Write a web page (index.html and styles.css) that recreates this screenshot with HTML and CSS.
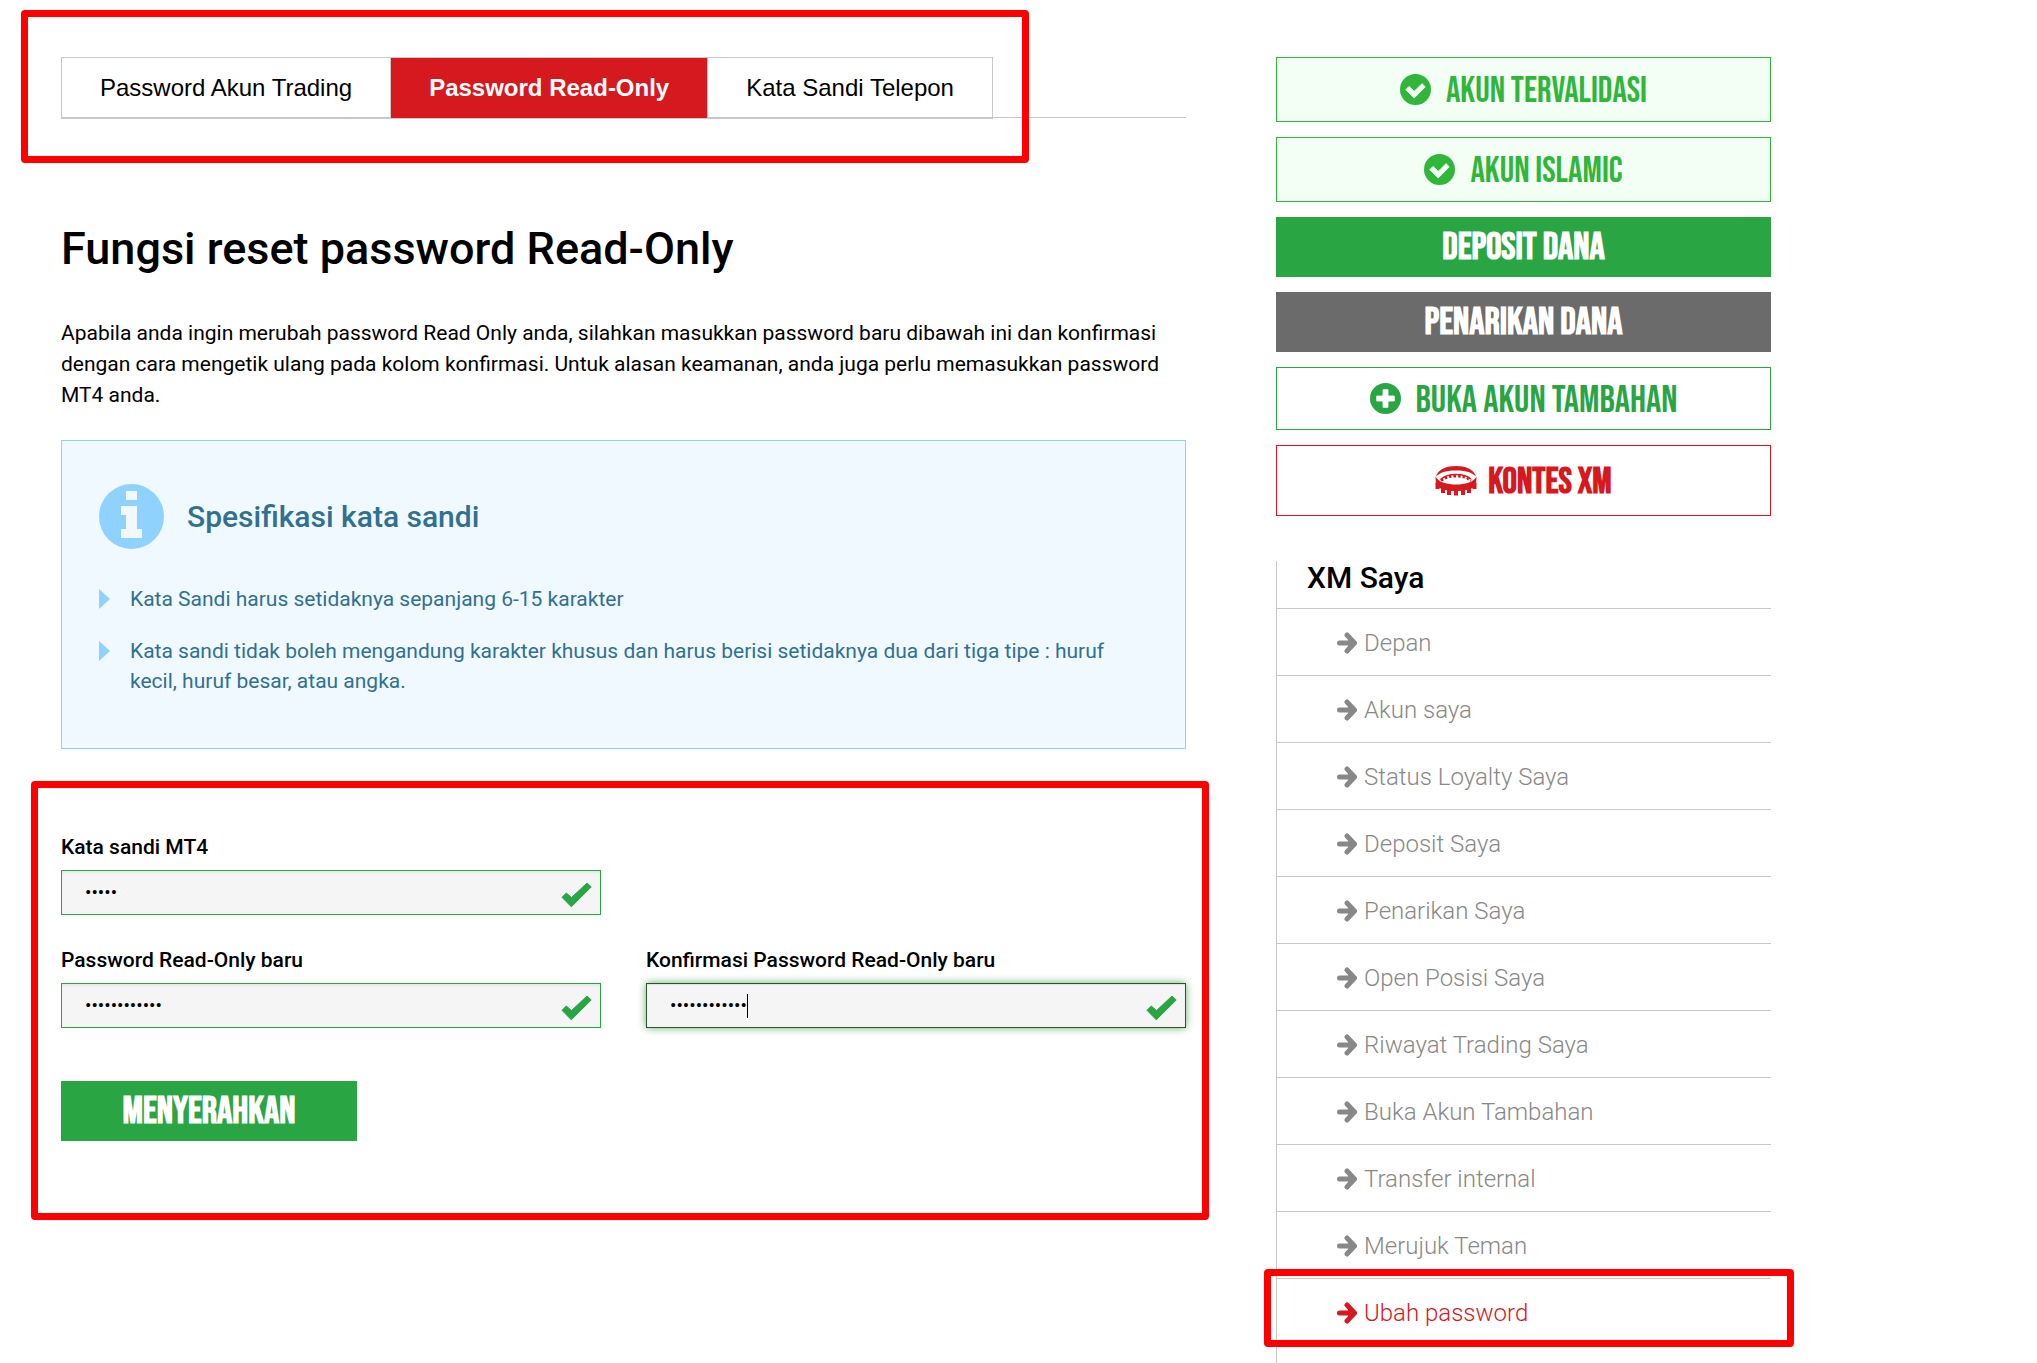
FILE: index.html
```html
<!DOCTYPE html>
<html lang="id">

<head>
    <meta charset="utf-8">
    <title>Ubah password</title>
    <link rel="stylesheet" href="styles.css">
</head>

<body>
    <svg width="0" height="0" class="sprite">
        <symbol id="icon-check-circle" viewBox="0 0 32 32">
            <circle cx="16" cy="16" r="16" fill="currentColor"/>
            <path d="M6 16.200l3.400-3.400 5.300 5.200 8-8 3.300 3.300-11.300 11.400z" fill="#f3fff5" stroke="#f3fff5" stroke-linejoin="round"/>
        </symbol>
        <symbol id="icon-plus-circle" viewBox="0 0 32 32">
            <circle cx="16" cy="16" r="16" fill="currentColor"/>
            <path d="M13.500 7h5v6.500H25v5h-6.500V25h-5v-6.500H7v-5h6.500z" fill="#fff" stroke="#fff" stroke-linejoin="round"/>
        </symbol>
        <symbol id="icon-arrow" viewBox="0 0 20 22">
            <path d="M2.500 11H15M10 3l7.500 8-7.500 8" fill="none" stroke="currentColor" stroke-width="5" stroke-linecap="round"/>
            <path d="M11 5l6 6-6 6z" fill="currentColor"/>
        </symbol>
        <symbol id="icon-check" viewBox="0 0 31 26">
            <path d="M1 15.300L5.300 11l5.200 4.600L26 1l4.200 4L10.300 24.800z" fill="currentColor" stroke="currentColor" stroke-linejoin="round"/>
        </symbol>
    </svg>

    <div class="page">
        <div class="content">
            <nav class="tabs">
                <ul class="tab-list">
                    <li><a href="#" class="tab">Password Akun Trading</a></li>
                    <li><a href="#" class="tab active">Password Read-Only</a></li>
                    <li><a href="#" class="tab">Kata Sandi Telepon</a></li>
                </ul>
            </nav>

            <h1>Fungsi reset password Read-Only</h1>
            <p class="intro">Apabila anda ingin merubah password Read Only anda, silahkan masukkan password baru dibawah ini dan konfirmasi dengan cara mengetik ulang pada kolom konfirmasi. Untuk alasan keamanan, anda juga perlu memasukkan password MT4 anda.</p>

            <div class="info-box">
                <div class="info-title">
                    <svg class="info-icon" viewBox="0 0 65 65">
                        <circle cx="32.500" cy="32.500" r="32.500" fill="#8fd2ff"/>
                        <path d="M27 7h11v9H27zM22 22h16v23h5v9H22v-9h5V31h-5z" fill="#f0f9ff"/>
                    </svg>
                    <h2>Spesifikasi kata sandi</h2>
                </div>
                <ul class="rules">
                    <li>Kata Sandi harus setidaknya sepanjang 6-15 karakter</li>
                    <li>Kata sandi tidak boleh mengandung karakter khusus dan harus berisi setidaknya dua dari tiga tipe : huruf kecil, huruf besar, atau angka.</li>
                </ul>
            </div>

            <form class="password-form">
                <div class="field">
                    <label for="mt4">Kata sandi MT4</label>
                    <div class="input-wrap">
                        <input type="password" id="mt4" value="abc12">
                        <svg class="valid"><use href="#icon-check"/></svg>
                    </div>
                </div>
                <div class="field new">
                    <label for="newPassword">Password Read-Only baru</label>
                    <div class="input-wrap">
                        <input type="password" id="newPassword" value="abcdef123456">
                        <svg class="valid"><use href="#icon-check"/></svg>
                    </div>
                </div>
                <div class="field confirm">
                    <label for="confirmPassword">Konfirmasi Password Read-Only baru</label>
                    <div class="input-wrap">
                        <input type="password" id="confirmPassword" value="abcdef123456" autofocus>
                        <span class="caret"></span>
                        <svg class="valid"><use href="#icon-check"/></svg>
                    </div>
                </div>
                <button type="submit" class="submit">MENYERAHKAN</button>
            </form>
        </div>

        <div class="sidebar">
            <a href="#" class="btn status"><svg><use href="#icon-check-circle"/></svg><span>AKUN TERVALIDASI</span></a>
            <a href="#" class="btn status"><svg><use href="#icon-check-circle"/></svg><span>AKUN ISLAMIC</span></a>
            <a href="#" class="btn deposit">DEPOSIT DANA</a>
            <a href="#" class="btn withdraw">PENARIKAN DANA</a>
            <a href="#" class="btn open-account"><svg><use href="#icon-plus-circle"/></svg><span>BUKA AKUN TAMBAHAN</span></a>
            <a href="#" class="btn contest">
                <svg class="arena" viewBox="0 0 42 30">
                    <path d="M1 10.500C3 3 12 0 21 0s18 3 20 10.500C37 6 29 4.500 21 4.500S5 6 1 10.500z" fill="currentColor"/>
                    <path d="M6 13c4-3.500 9-4.500 15-4.500s11 1 15 4.500" fill="none" stroke="currentColor" stroke-width="1.500"/>
                    <path d="M6 14.500c4-3.500 9-4.500 15-4.500s11 1 15 4.500" fill="none" stroke="currentColor" stroke-width="3" stroke-dasharray="2.500 2"/>
                    <path d="M0.500 10.500c3 6 12 8 20.500 8s17.500-2 20.500-8l-.5 9c-4 4-12 5.500-20 5.500S5 23.500 1 19.500z" fill="currentColor"/>
                    <path d="M2.500 17v6M8 19v8M14 20v9M21 20v9.500M28 20v9M34 19v8M39.500 17v6" fill="none" stroke="currentColor" stroke-width="4"/>
                </svg><span>KONTES XM</span></a>

            <nav class="menu">
                <h3>XM Saya</h3>
                <ul>
                    <li><a href="#"><svg><use href="#icon-arrow"/></svg>Depan</a></li>
                    <li><a href="#"><svg><use href="#icon-arrow"/></svg>Akun saya</a></li>
                    <li><a href="#"><svg><use href="#icon-arrow"/></svg>Status Loyalty Saya</a></li>
                    <li><a href="#"><svg><use href="#icon-arrow"/></svg>Deposit Saya</a></li>
                    <li><a href="#"><svg><use href="#icon-arrow"/></svg>Penarikan Saya</a></li>
                    <li><a href="#"><svg><use href="#icon-arrow"/></svg>Open Posisi Saya</a></li>
                    <li><a href="#"><svg><use href="#icon-arrow"/></svg>Riwayat Trading Saya</a></li>
                    <li><a href="#"><svg><use href="#icon-arrow"/></svg>Buka Akun Tambahan</a></li>
                    <li><a href="#"><svg><use href="#icon-arrow"/></svg>Transfer internal</a></li>
                    <li><a href="#"><svg><use href="#icon-arrow"/></svg>Merujuk Teman</a></li>
                    <li class="current"><a href="#"><svg><use href="#icon-arrow"/></svg>Ubah password</a></li>
                </ul>
            </nav>
        </div>
    </div>
</body>

</html>
```
FILE: styles.css
```css
* {
    box-sizing: border-box;
}

body {
    margin: 0;
    font-family: Roboto, sans-serif;
    font-size: 21px;
    color: #000;
    background-color: #fff;
}

ul {
    list-style: none;
    margin: 0;
    padding: 0;
}

a {
    color: inherit;
    text-decoration: none;
}

.sprite {
    position: absolute;
}

.page {
    display: grid;
    grid-template-columns: 25fr 11fr;
    gap: 90px;
    min-height: 100vh;
    padding: 57px 266px 0 61px;
}

/* tabs */
.tabs {
    display: flex;
    border-bottom: 1px solid #c8c8c8;
}

.tab-list {
    display: flex;
    position: relative;
    margin-bottom: -2px;
    border: 1px solid #c8c8c8;
}

.tab-list li + li {
    border-left: 1px solid #c8c8c8;
}

.tab {
    display: block;
    padding: 0 38px;
    font-family: "Liberation Sans", Arial, sans-serif;
    font-size: 24px;
    line-height: 60px;
}

.tab.active {
    background-color: #d6181f;
    color: #fff;
    font-weight: bold;
}

/* red frames */
.tab-list::after,
.password-form::after,
.current::after {
    content: "";
    position: absolute;
    border: 7px solid #ff0000;
    border-radius: 4px;
    pointer-events: none;
}

.tab-list::after {
    inset: -48px -37px -45px -41px;
}

.password-form::after {
    inset: -51px -23px -79px -30px;
}

.current::after {
    inset: -10px -23px -2px -13px;
}

h1 {
    margin: 100px 0 0;
    font-size: 45px;
    font-weight: 500;
    line-height: 62px;
}

.intro {
    margin: 38px 0 0;
    line-height: 31px;
}

/* info box */
.info-box {
    margin-top: 29px;
    padding: 43px 37px 52px;
    border: 1px solid #8fd2ff;
    background-color: #f0f9ff;
    color: #31708f;
}

.info-title {
    display: flex;
    align-items: center;
    gap: 23px;
}

.info-icon {
    width: 65px;
    height: 65px;
}

h2 {
    margin: 0;
    font-size: 30px;
    font-weight: 500;
}

.rules {
    margin-top: 35px;
}

.rules li {
    position: relative;
    margin-bottom: 22px;
    padding-left: 31px;
    line-height: 30px;
}

.rules li:last-child {
    margin-bottom: 0;
}

.rules li::before {
    content: "";
    position: absolute;
    left: 0;
    top: 5px;
    border-left: 11px solid #8fd2ff;
    border-top: 10px solid transparent;
    border-bottom: 10px solid transparent;
}

/* form */
.password-form {
    display: grid;
    grid-template-columns: 1fr 1fr;
    gap: 30px 45px;
    position: relative;
    margin-top: 83px;
}

.field.new {
    grid-area: 2 / 1;
}

.field.confirm {
    grid-area: 2 / 2;
}

label {
    display: block;
    margin-bottom: 8px;
    font-weight: 500;
    line-height: 30px;
}

.input-wrap {
    position: relative;
}

input {
    display: block;
    width: 100%;
    height: 45px;
    padding: 0 50px 0 23px;
    border: 1px solid #2aa544;
    background-color: #f5f5f5;
    box-shadow: inset 0 2px 2px #e8e8e8;
    font-family: Roboto, sans-serif;
    font-size: 19px;
    color: #000;
}

input:focus {
    outline: none;
    border-color: #2b542c;
    box-shadow: inset 0 1px 1px #e0e0e0, 0 0 8px #67b168;
    caret-color: transparent;
}

.caret {
    position: absolute;
    left: 101px;
    top: 11px;
    width: 1px;
    height: 24px;
    background-color: #000;
}

.valid {
    position: absolute;
    right: 9px;
    top: 12px;
    width: 31px;
    height: 26px;
    color: #2aa544;
}

.btn,
.submit {
    display: flex;
    align-items: center;
    justify-content: center;
    height: 60px;
    margin-bottom: 15px;
    font-family: "Bebas Neue", "Liberation Sans Narrow", sans-serif;
    font-size: 38px;
    font-weight: bold;
    color: #fff;
}

.submit {
    grid-column: 1;
    width: 296px;
    margin: 23px 0 0;
    border: none;
    background-color: #2aa544;
    cursor: pointer;
}

/* sidebar */
.sidebar {
    display: flex;
    flex-direction: column;
}

.btn svg {
    width: 31px;
    height: 31px;
    margin-right: 15px;
}

.btn span {
    padding-top: 3px;
}

.btn.status {
    height: 65px;
    border: 1px solid #32b53b;
    background-color: #f3fff5;
    font-size: 36px;
    font-weight: normal;
    color: #32b53b;
}

.btn.deposit {
    background-color: #2aa544;
}

.btn.withdraw {
    background-color: #6b6b6b;
}

.btn.open-account {
    height: 63px;
    border: 1px solid #2aa544;
    font-weight: normal;
    color: #2aa544;
}

.btn.contest {
    height: 71px;
    border: 1px solid #d6181f;
    font-size: 36px;
    color: #d6181f;
}

.btn .arena {
    width: 42px;
    height: 30px;
    margin-right: 11px;
}

.menu {
    flex: 1;
    margin-top: 30px;
    border-left: 1px solid #c8c8c8;
}

.menu h3 {
    margin: 0;
    padding-left: 30px;
    padding-bottom: 13px;
    font-size: 30px;
    font-weight: 500;
    line-height: 34px;
}

.menu li {
    position: relative;
    border-top: 1px solid #c8c8c8;
}

.menu a {
    display: flex;
    align-items: center;
    padding-top: 2px;
    padding-left: 60px;
    font-size: 24px;
    font-weight: 300;
    line-height: 64px;
    color: #888;
}

.menu svg {
    width: 20px;
    height: 22px;
    margin-right: 7px;
}

.menu .current a {
    color: #d6181f;
}
```
